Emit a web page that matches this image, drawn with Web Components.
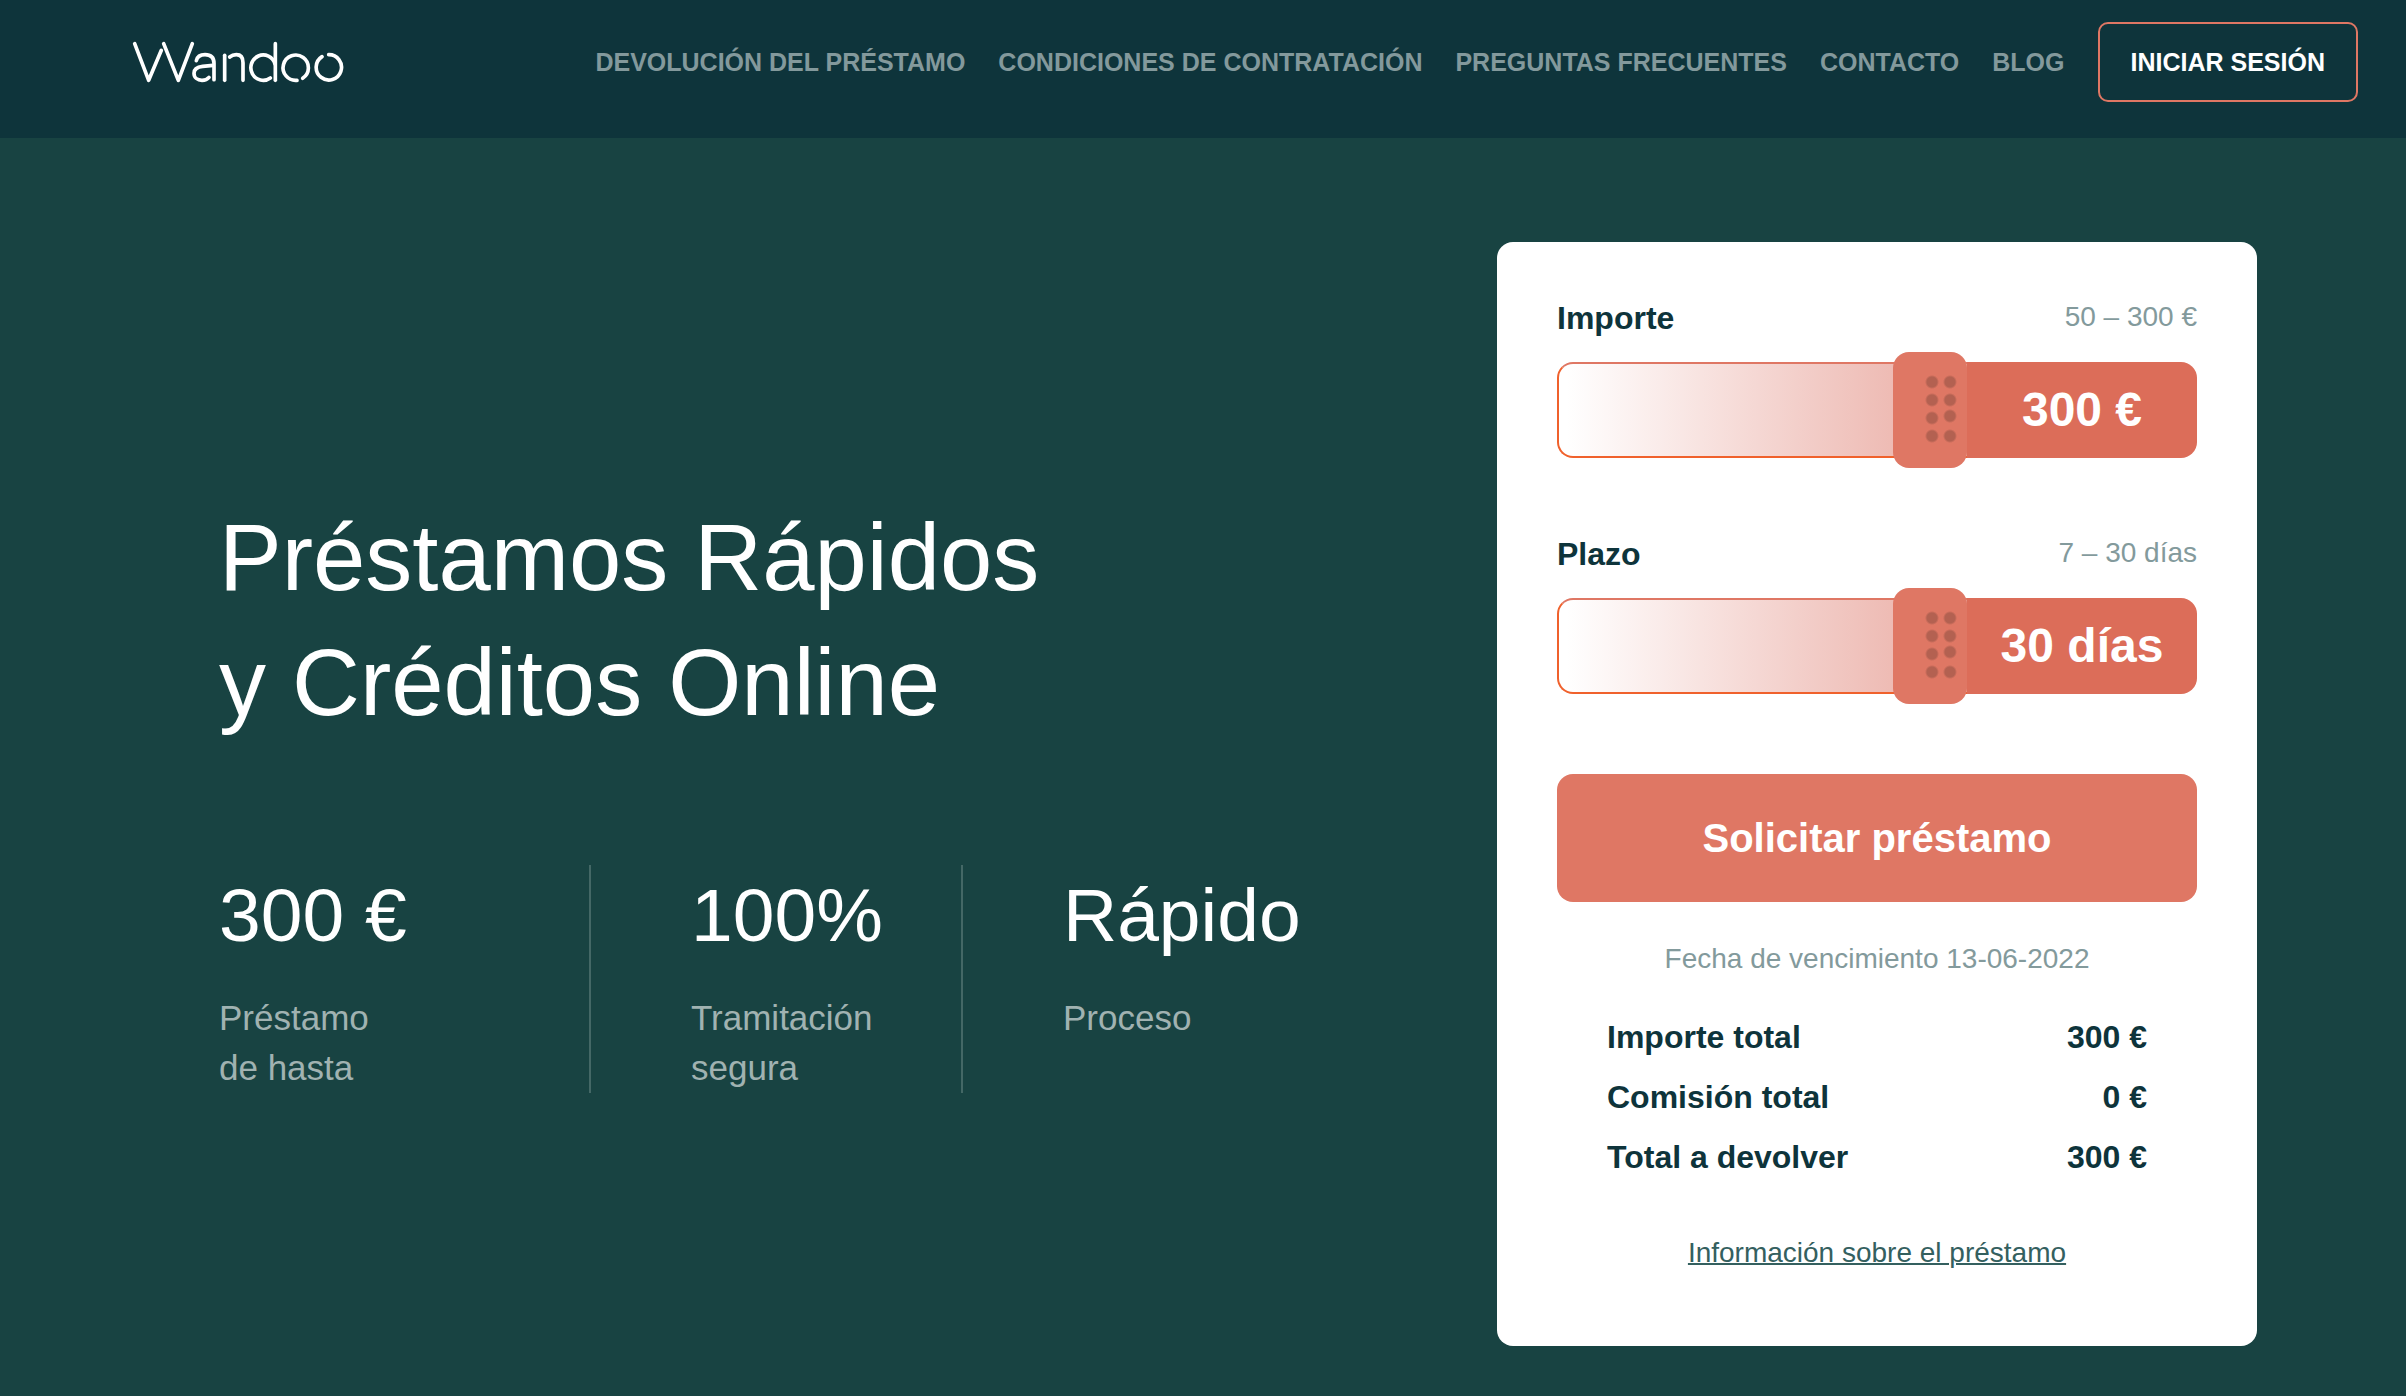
<!DOCTYPE html>
<html lang="es">
<head>
<meta charset="utf-8">
<title>Wandoo</title>
<style>
  html { background: #184342; }
  body { margin: 0; font-family: "Liberation Sans", Arial, sans-serif; color: #0e343b; }
</style>
</head>
<body>
<wandoo-page></wandoo-page>

<script>
const define = (name, html, setup) => customElements.define(name, class extends HTMLElement {
  connectedCallback() {
    if (this.shadowRoot) return;
    const root = this.attachShadow({ mode: 'open' });
    root.innerHTML = typeof html === 'function' ? html(this) : html;
    if (setup) setup(this, root);
  }
});

define('wandoo-logo', `
  <style>
    :host { display: block; }
    a, svg { display: block; }
  </style>
  <a href="#" aria-label="Wandoo">
    <svg width="212" height="42" viewBox="66 63 636 126" fill="none" stroke="#fff" stroke-width="11" stroke-linecap="round" stroke-linejoin="round">
      <path d="M74 71 116 181 154 91"/>
      <path d="M161 71 205 181 247 71"/>
      <path d="M259 122C262 109 272 104 285 104C305 104 312 114 312 130V179"/>
      <path d="M309 136 278 139C258 141 252 149 252 160C252 173 263 181 276 181C286 181 293 177 297 172"/>
      <path d="M344 106V181"/>
      <path d="M359 111C365 106 373 104 379 104C393 104 399 114 399 128V181"/>
      <path d="M496 71V181"/>
      <path d="M495 132A37 38 0 1 0 481 174"/>
      <path d="M561 181A38 38 0 1 1 578 175"/>
      <path d="M656 104A38 38 0 1 1 636 110"/>
    </svg>
  </a>`);

define('nav-link', el => `
  <style>
    :host { display: block; }
    a { display: block; font-size: 25px; line-height: 32px; font-weight: 700; color: #83999c; text-decoration: none; white-space: nowrap; }
    :host([outlined]) a { box-sizing: border-box; padding: 22px 31px; border: 2px solid #df7764; border-radius: 10px; color: #fff; }
  </style>
  <a href="${el.getAttribute('href') || '#'}"><slot></slot></a>`);

define('site-header', `
  <style>
    :host { display: block; background: #0e343b; }
    header { display: flex; align-items: center; justify-content: space-between; padding: 22px 48px 36px 132px; }
    nav { display: flex; align-items: center; gap: 33px; }
  </style>
  <header>
    <wandoo-logo></wandoo-logo>
    <nav><slot></slot></nav>
  </header>`);

define('hero-stat', `
  <style>
    :host { display: block; box-sizing: border-box; border-right: 2px solid #446866; padding-left: 100px; color: #a0b2b1; font-size: 35px; line-height: 50px; }
    :host(:first-child) { padding-left: 0; }
    :host(:last-child) { border-right-color: transparent; }
    .figure { font-size: 75px; line-height: 100px; margin-bottom: 28px; color: #fff; white-space: nowrap; }
  </style>
  <div class="figure"><slot name="figure"></slot></div>
  <div><slot></slot></div>`);

define('hero-intro', `
  <style>
    :host { display: block; color: #fff; }
    h1 { margin: 0 0 120px; font-size: 94px; line-height: 125px; font-weight: 400; }
    .stats { display: grid; grid-template-columns: repeat(3, 372px); }
  </style>
  <h1>Préstamos Rápidos<br>y Créditos Online</h1>
  <div class="stats">
    <hero-stat><span slot="figure">300 €</span>Préstamo<br>de hasta</hero-stat>
    <hero-stat><span slot="figure">100%</span>Tramitación<br>segura</hero-stat>
    <hero-stat><span slot="figure">Rápido</span>Proceso</hero-stat>
  </div>`);

define('loan-slider', el => {
  const { label, range, min, max, unit } = el.dataset;
  return `
  <style>
    :host { display: block; }
    .head { display: flex; justify-content: space-between; align-items: flex-start; margin-bottom: 24px; }
    label { font-size: 32px; line-height: 40px; font-weight: 700; }
    .range { font-size: 28px; line-height: 38px; color: #839a9c; }
    .control { display: flex; height: 96px; }
    input {
      -webkit-appearance: none; appearance: none; box-sizing: border-box;
      flex: 1; min-width: 0; height: 96px; margin: 0; cursor: pointer;
      border: 2px solid #f0612c; border-top-color: #df7764; border-right: 0;
      border-radius: 16px 0 0 16px;
      background: linear-gradient(to right, #fff 2%, #eebbb4 82%);
    }
    input::-webkit-slider-runnable-track { height: 92px; }
    input::-webkit-slider-thumb {
      -webkit-appearance: none; width: 74px; height: 116px; margin-top: -12px;
      border-radius: 16px;
      background:
        radial-gradient(circle at 39px 30px, #b36151 5px, transparent 7px),
        radial-gradient(circle at 57px 30px, #b36151 5px, transparent 7px),
        radial-gradient(circle at 39px 48px, #b36151 5px, transparent 7px),
        radial-gradient(circle at 57px 48px, #b36151 5px, transparent 7px),
        radial-gradient(circle at 39px 66px, #b36151 5px, transparent 7px),
        radial-gradient(circle at 57px 64px, #b36151 5px, transparent 7px),
        radial-gradient(circle at 39px 84px, #b36151 5px, transparent 7px),
        radial-gradient(circle at 57px 84px, #b36151 5px, transparent 7px),
        #df7764;
    }
    output {
      flex: 0 0 230px; border-radius: 0 16px 16px 0; background: #dc6d59; color: #fff;
      font-size: 48px; line-height: 96px; font-weight: 700; text-align: center;
    }
  </style>
  <div class="head">
    <label for="amount">${label}</label>
    <span class="range">${range}</span>
  </div>
  <div class="control">
    <input id="amount" type="range" min="${min}" max="${max}" value="${max}">
    <output for="amount">${max} ${unit}</output>
  </div>`;
}, (el, root) => {
  const input = root.querySelector('input');
  input.addEventListener('input', () => {
    root.querySelector('output').textContent = `${input.value} ${el.dataset.unit}`;
  });
});

define('loan-card', `
  <style>
    :host { display: block; box-sizing: border-box; padding: 56px 60px 73px; border-radius: 16px; background: #fff; }
    .sliders { display: flex; flex-direction: column; gap: 76px; margin-bottom: 80px; }
    button { display: block; width: 100%; height: 128px; border: 0; border-radius: 16px; background: #df7764; color: #fff; font: 700 40px/48px "Liberation Sans", Arial, sans-serif; cursor: pointer; }
    p { margin: 37px 0 28px; font-size: 28px; line-height: 40px; text-align: center; color: #839a9c; }
    dl { margin: 0 50px 46px; font-size: 32px; line-height: 60px; font-weight: 700; }
    dl div { display: flex; justify-content: space-between; }
    dd { margin: 0; }
    .info { font-size: 28px; line-height: 40px; text-align: center; }
    .info a { color: #34605f; text-decoration-thickness: 2px; }
  </style>
  <form>
    <div class="sliders">
      <loan-slider data-label="Importe" data-range="50 – 300 €" data-min="50" data-max="300" data-unit="€"></loan-slider>
      <loan-slider data-label="Plazo" data-range="7 – 30 días" data-min="7" data-max="30" data-unit="días"></loan-slider>
    </div>
    <button type="button">Solicitar préstamo</button>
  </form>
  <p>Fecha de vencimiento 13-06-2022</p>
  <dl>
    <div><dt>Importe total</dt><dd>300 €</dd></div>
    <div><dt>Comisión total</dt><dd>0 €</dd></div>
    <div><dt>Total a devolver</dt><dd>300 €</dd></div>
  </dl>
  <div class="info"><a href="#">Información sobre el préstamo</a></div>`);

define('wandoo-page', `
  <style>
    :host { display: block; }
    main { display: flex; align-items: center; justify-content: space-between; padding: 104px 149px 50px 219px; }
    loan-card { flex: 0 0 760px; }
  </style>
  <site-header>
    <nav-link>DEVOLUCIÓN DEL PRÉSTAMO</nav-link>
    <nav-link>CONDICIONES DE CONTRATACIÓN</nav-link>
    <nav-link>PREGUNTAS FRECUENTES</nav-link>
    <nav-link>CONTACTO</nav-link>
    <nav-link>BLOG</nav-link>
    <nav-link outlined>INICIAR SESIÓN</nav-link>
  </site-header>
  <main>
    <hero-intro></hero-intro>
    <loan-card></loan-card>
  </main>`);
</script>
</body>
</html>
